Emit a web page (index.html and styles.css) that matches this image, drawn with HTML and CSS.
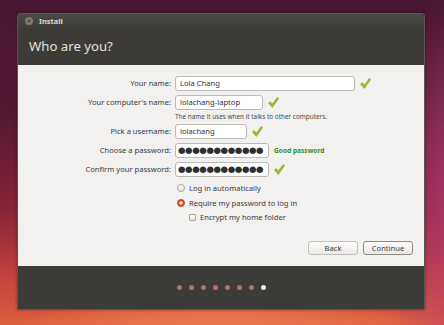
FILE: index.html
```html
<!DOCTYPE html>
<html lang="en">
<head>
  <meta charset="UTF-8" />
  <title>Install</title>
  <link rel="stylesheet" href="styles.css">
</head>
<body>
  <div class="window">
    <div class="titlebar">
      <span class="close-btn">
        <svg width="8" height="8" viewBox="0 0 8 8"><circle cx="4" cy="4" r="4" fill="#7c7a75"/><path d="M2.5 2.5 L5.5 5.5 M5.5 2.5 L2.5 5.5" stroke="#3e3d39" stroke-width="1"/></svg>
      </span>
      <span class="title">Install</span>
    </div>

    <div class="header">
      <h1>Who are you?</h1>
    </div>

    <div class="content">
      <div class="form">
        <label>Your name:</label>
        <div class="field">
          <div class="entry name-entry">Lola Chang</div>
          <svg class="tick" width="11" height="11" viewBox="0 0 11 11"><path d="M0.5 6 L2.3 4.6 L4.2 7.2 L9.3 0.6 L10.6 1.6 L4.4 10.4 Z" fill="#a3bd2c" stroke="#829c1a" stroke-width="0.6"/></svg>
        </div>

        <label>Your computer's name:</label>
        <div class="field">
          <div class="entry host-entry">lolachang-laptop</div>
          <svg class="tick" width="11" height="11" viewBox="0 0 11 11"><path d="M0.5 6 L2.3 4.6 L4.2 7.2 L9.3 0.6 L10.6 1.6 L4.4 10.4 Z" fill="#a3bd2c" stroke="#829c1a" stroke-width="0.6"/></svg>
        </div>

        <span></span>
        <div class="hint">The name it uses when it talks to other computers.</div>

        <label>Pick a username:</label>
        <div class="field">
          <div class="entry user-entry">lolachang</div>
          <svg class="tick" width="11" height="11" viewBox="0 0 11 11"><path d="M0.5 6 L2.3 4.6 L4.2 7.2 L9.3 0.6 L10.6 1.6 L4.4 10.4 Z" fill="#a3bd2c" stroke="#829c1a" stroke-width="0.6"/></svg>
        </div>

        <label>Choose a password:</label>
        <div class="field">
          <div class="entry pass-entry"><span class="dots">●●●●●●●●●●●●</span></div>
          <span class="strength">Good password</span>
        </div>

        <label>Confirm your password:</label>
        <div class="field">
          <div class="entry pass-entry"><span class="dots">●●●●●●●●●●●●</span></div>
          <svg class="tick" width="11" height="11" viewBox="0 0 11 11"><path d="M0.5 6 L2.3 4.6 L4.2 7.2 L9.3 0.6 L10.6 1.6 L4.4 10.4 Z" fill="#a3bd2c" stroke="#829c1a" stroke-width="0.6"/></svg>
        </div>

        <span></span>
        <div class="options">
          <div class="option"><span class="radio"></span>Log in automatically</div>
          <div class="option"><span class="radio checked"></span>Require my password to log in</div>
          <div class="option sub"><span class="checkbox"></span>Encrypt my home folder</div>
        </div>
      </div>

      <div class="buttons">
        <button>Back</button>
        <button class="default">Continue</button>
      </div>
    </div>

    <div class="footer">
      <div class="progress">
        <span class="dot"></span>
        <span class="dot"></span>
        <span class="dot"></span>
        <span class="dot"></span>
        <span class="dot"></span>
        <span class="dot"></span>
        <span class="dot"></span>
        <span class="dot current"></span>
      </div>
    </div>
  </div>
</body>
</html>
```

FILE: styles.css
```css
* {
  margin: 0;
  padding: 0;
  box-sizing: border-box;
  font-family: 'Noto Sans', 'DejaVu Sans', sans-serif;
}

body {
  width: 444px;
  height: 325px;
  overflow: hidden;
  background:
    radial-gradient(ellipse 240px 80px at 50% 112%, #f6a56c 0%, #ea7b50 45%, rgba(226, 100, 70, 0) 100%),
    radial-gradient(ellipse 110px 220px at 108% 62%, #b43c75 0%, rgba(160, 45, 100, 0) 100%),
    linear-gradient(to bottom, #471630 0%, #541933 35%, #882338 65%, #c4423a 85%, #de5e3e 100%);
  padding: 13px 0 0 17px;
}

.window {
  width: 408px;
  height: 297px;
  border: 1px solid #5a5853;
  border-radius: 3px 3px 0 0;
  background: #3c3b37;
  display: flex;
  flex-direction: column;
  box-shadow: 0 0 3px rgba(0, 0, 0, 0.4);
}

.titlebar {
  height: 14px;
  display: flex;
  align-items: center;
  padding-left: 7px;
  gap: 6px;
  background: linear-gradient(#4b4a46, #3e3d39);
  border-radius: 3px 3px 0 0;
}

.close-btn {
  display: flex;
}

.title {
  color: #dfdbd2;
  font-size: 7.5px;
  font-weight: bold;
}

.header {
  height: 37px;
  padding: 9px 0 0 11px;
}

.header h1 {
  color: #e4e1da;
  font-size: 13.2px;
  font-weight: normal;
  line-height: 18px;
}

.content {
  height: 201px;
  background: #f2f1f0;
  display: flex;
  flex-direction: column;
  padding: 11px 11px 11px 0;
}

.form {
  display: grid;
  grid-template-columns: 153px 1fr;
  column-gap: 4px;
  row-gap: 4px;
  font-size: 7.6px;
  color: #3c3c3c;
}

.form label {
  text-align: right;
  line-height: 15px;
}

.field {
  display: flex;
  align-items: center;
  gap: 5px;
  height: 15px;
}

.entry {
  height: 15px;
  background: #fff;
  border: 1px solid #bdb9b3;
  border-radius: 3px;
  padding: 0 4px;
  line-height: 13px;
  color: #333;
  overflow: hidden;
  white-space: nowrap;
}

.name-entry { width: 180px; }
.host-entry { width: 88px; }
.user-entry { width: 72px; }
.pass-entry { width: 94px; padding: 0 2px; }

.dots {
  font-family: 'DejaVu Sans', sans-serif;
  font-size: 8.6px;
  letter-spacing: -0.4px;
  color: #2e2e2e;
}

.strength {
  color: #3f8d1a;
  font-weight: bold;
  font-size: 6.6px;
}

.hint {
  font-size: 6.4px;
  color: #4a4a4a;
  line-height: 9px;
  margin: -2px 0 -1px;
}

.options {
  display: flex;
  flex-direction: column;
}

.option {
  display: flex;
  align-items: center;
  gap: 4px;
  height: 14.5px;
  padding-left: 2px;
}

.option.sub {
  padding-left: 14px;
}

.radio {
  width: 8px;
  height: 8px;
  border-radius: 50%;
  border: 1px solid #a9a59f;
  background: linear-gradient(#ffffff, #e6e4e1);
}

.radio.checked {
  border-color: #b5431a;
  background: radial-gradient(circle, #fbe3d6 0 1.4px, #e0561f 1.8px);
}

.checkbox {
  width: 7px;
  height: 7px;
  border: 1px solid #a9a59f;
  border-radius: 1px;
  background: linear-gradient(#ffffff, #e6e4e1);
}

.buttons {
  margin-top: auto;
  display: flex;
  justify-content: flex-end;
  gap: 5px;
}

.buttons button {
  width: 50px;
  height: 14px;
  font-size: 7.6px;
  color: #3c3c3c;
  border: 1px solid #c4c0ba;
  border-radius: 3px;
  background: linear-gradient(#fbfbfa, #ebe9e6);
}

.buttons button.default {
  border-color: #8e8a84;
}

.footer {
  flex: 1;
  display: flex;
  align-items: center;
  justify-content: center;
  padding-bottom: 1px;
}

.progress {
  display: flex;
  gap: 7px;
}

.dot {
  width: 5px;
  height: 5px;
  border-radius: 50%;
  background: #c46a5c;
}

.dot.current {
  background: #f0ece6;
}
```
